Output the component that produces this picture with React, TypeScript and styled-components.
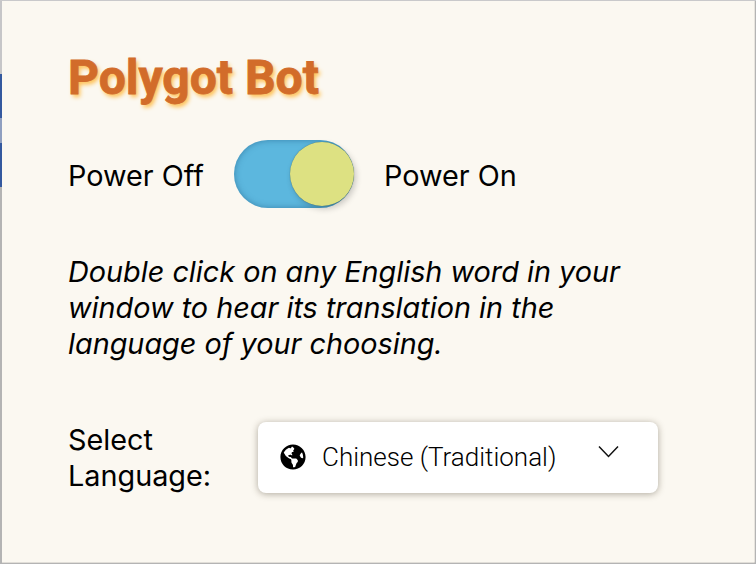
import React from "react";
import styled, { createGlobalStyle } from "styled-components";
import { FaGlobeAmericas } from "react-icons/fa";

const Global = createGlobalStyle`
  html, body { margin: 0; padding: 0; width: 756px; height: 564px; overflow: hidden; background: #b4b4b4; }
  #root { width: 756px; height: 564px; }
`;

const Frame = styled.div`
  display: flex;
  width: 756px;
  height: 564px;
  box-sizing: border-box;
  padding: 1px 1px 1px 0;
  background: linear-gradient(to bottom, #c9c9cb 0 1px, #b4b4b4 1px);
`;

const EdgeStrip = styled.div`
  width: 2px;
  flex: none;
  background: linear-gradient(
    to bottom,
    #c6c6c8 0 73px,
    #34599f 73px 117px,
    #8f9fc0 117px 142px,
    #34599f 142px 186px,
    #b4b4b4 186px
  );
`;

const Panel = styled.main`
  flex: 1;
  box-sizing: border-box;
  padding: 44px 96px 0 66px;
  background: #fbf8f1;
  box-shadow: inset -1px 0 0 rgba(0, 0, 0, 0.08), inset 0 -1px 0 rgba(0, 0, 0, 0.1);
  font-family: Inter, "Liberation Sans", sans-serif;
  color: #000;
`;

const Title = styled.h1`
  margin: 0;
  font-family: Roboto, "Liberation Sans", sans-serif;
  font-size: 48px;
  line-height: 66px;
  font-weight: 700;
  color: #d26c2a;
  -webkit-text-stroke: 0.8px #d26c2a;
  text-shadow: 2px 3px 4px #ffbf4f;
`;

const PowerRow = styled.div`
  display: flex;
  align-items: center;
  gap: 30px;
  margin-top: 29px;
  height: 68px;
  font-size: 28.8px;
`;

const PowerLabel = styled.span`
  padding-top: 2px;
`;

const Switch = styled.div`
  position: relative;
  width: 120px;
  height: 68px;
  border-radius: 34px;
  background: #5cb7de;
  box-shadow: inset 0 0 6px rgba(30, 90, 130, 0.55);
`;

const Knob = styled.div`
  position: absolute;
  top: 2px;
  right: 0;
  width: 64px;
  height: 64px;
  border-radius: 50%;
  background: #dde182;
  box-shadow: 2px 3px 6px rgba(0, 0, 0, 0.2), 0 0 1px rgba(40, 80, 90, 0.8);
`;

const Description = styled.p`
  margin: 46px 0 0;
  font-size: 28.8px;
  line-height: 36px;
  font-style: italic;
`;

const LanguageRow = styled.div`
  display: flex;
  align-items: flex-start;
  gap: 46px;
  margin-top: 59px;
`;

const LanguageLabel = styled.label`
  width: 144px;
  padding-top: 1px;
  font-size: 28.8px;
  line-height: 36px;
`;

const Select = styled.div`
  display: flex;
  align-items: center;
  width: 400px;
  height: 71px;
  margin-top: 1px;
  box-sizing: border-box;
  padding: 0 39px 2px 22px;
  background: #fff;
  border-radius: 8px;
  box-shadow: 0 1px 7px rgba(60, 50, 30, 0.4);
  font-family: Roboto, "Liberation Sans", sans-serif;
  font-weight: 300;
  font-size: 26px;
`;

const SelectText = styled.span`
  margin-left: 16px;
  flex: 1;
  white-space: nowrap;
`;

const Chevron = styled.svg`
  width: 21px;
  height: 13px;
  margin-bottom: 10px;
  fill: none;
  stroke: #111;
  stroke-width: 1.5;
`;

const Globe = styled(FaGlobeAmericas)`
  width: 26px;
  height: 26px;
  color: #000;
  flex: none;
`;

export default function App() {
  return (
    <>
      <Global />
      <Frame>
        <EdgeStrip />
        <Panel>
          <Title>Polygot Bot</Title>
          <PowerRow>
            <PowerLabel>Power Off</PowerLabel>
            <Switch>
              <Knob />
            </Switch>
            <PowerLabel>Power On</PowerLabel>
          </PowerRow>
          <Description>
            Double click on any English word in your window to hear its translation in the language of your choosing.
          </Description>
          <LanguageRow>
            <LanguageLabel>Select Language:</LanguageLabel>
            <Select>
              <Globe />
              <SelectText>Chinese (Traditional)</SelectText>
              <Chevron viewBox="0 0 21 13">
                <path d="M1 1.5l9.5 10 9.5-10" />
              </Chevron>
            </Select>
          </LanguageRow>
        </Panel>
      </Frame>
    </>
  );
}
